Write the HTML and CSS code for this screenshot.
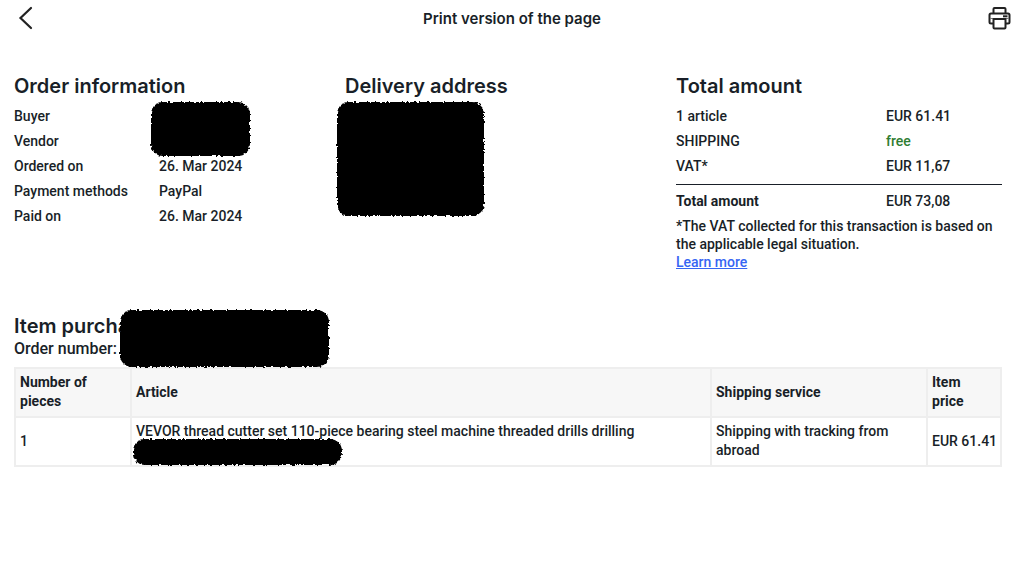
FILE: index.html
```html
<!DOCTYPE html>
<html lang="en">

<head>
  <meta charset="UTF-8" />
  <meta name="viewport" content="width=device-width, initial-scale=1.0" />
  <title>Print version of the page</title>
  <link rel="stylesheet" href="styles.css">
</head>

<body>
  <!-- rough marker edge for the blacked out areas -->
  <svg class="defs" width="0" height="0" aria-hidden="true">
    <filter id="rough" x="-5%" y="-10%" width="110%" height="120%">
      <feTurbulence type="fractalNoise" baseFrequency="0.4" numOctaves="2" seed="4" />
      <feDisplacementMap in="SourceGraphic" scale="4" xChannelSelector="R" yChannelSelector="G" />
    </filter>
  </svg>

  <header class="topbar">
    <button class="icon-btn" type="button" aria-label="Back">
      <svg width="24" height="24" viewBox="0 0 24 24" fill="none" stroke="#222" stroke-width="2.200" stroke-linecap="round">
        <path d="M19 2 8.500 12 19 22" />
      </svg>
    </button>
    <h1>Print version of the page</h1>
    <button class="icon-btn" type="button" aria-label="Print">
      <svg width="24" height="24" viewBox="0 0 24 24" fill="none" stroke="#222" stroke-width="2" stroke-linejoin="round">
        <path d="M5.500 7V3q0-1 1-1h10q1 0 1 1v4" />
        <path d="M5.500 17.500H3q-1.500 0-1.500-1.500V9Q1.500 7.500 3 7.500h17q1.500 0 1.500 1.500v7q0 1.500-1.500 1.500h-2.500" />
        <path d="M2 12.500h19" stroke-width="1" stroke="#777" />
        <path d="M5.500 13h12v8.500q0 1-1 1h-10q-1 0-1-1z" fill="#fff" />
        <path d="M15 10.300h4.500" />
      </svg>
    </button>
  </header>

  <main class="page">
    <section class="summary">
      <div class="block">
        <h2>Order information</h2>
        <dl class="info">
          <dt>Buyer</dt>
          <dd></dd>
          <dt>Vendor</dt>
          <dd></dd>
          <dt>Ordered on</dt>
          <dd>26. Mar 2024</dd>
          <dt>Payment methods</dt>
          <dd>PayPal</dd>
          <dt>Paid on</dt>
          <dd>26. Mar 2024</dd>
        </dl>
        <span class="redacted redacted-buyer"></span>
      </div>

      <div class="block">
        <h2>Delivery address</h2>
        <span class="redacted redacted-address"></span>
      </div>

      <div class="block">
        <h2>Total amount</h2>
        <dl class="info amounts">
          <dt>1 article</dt>
          <dd>EUR 61.41</dd>
          <dt>SHIPPING</dt>
          <dd class="free">free</dd>
          <dt>VAT*</dt>
          <dd>EUR 11,67</dd>
        </dl>
        <dl class="info amounts total">
          <dt>Total amount</dt>
          <dd>EUR 73,08</dd>
        </dl>
        <p class="note">*The VAT collected for this transaction is based on the applicable legal situation.<br><a href="#">Learn more</a></p>
      </div>
    </section>

    <section class="block">
      <h2>Item purcha</h2>
      <p class="order-number">Order number:</p>
      <span class="redacted redacted-order"></span>
      <table class="items">
        <thead>
          <tr>
            <th class="col-count">Number of pieces</th>
            <th>Article</th>
            <th class="col-shipping">Shipping service</th>
            <th class="col-price">Item<br>price</th>
          </tr>
        </thead>
        <tbody>
          <tr>
            <td>1</td>
            <td class="article">VEVOR thread cutter set 110-piece bearing steel machine threaded drills drilling
              <span class="redacted redacted-article"></span>
            </td>
            <td>Shipping with tracking from abroad</td>
            <td class="price">EUR 61.41</td>
          </tr>
        </tbody>
      </table>
    </section>
  </main>
</body>

</html>
```

FILE: styles.css
```css
* {
  box-sizing: border-box;
}

body {
  margin: 0;
  background: #fff;
  color: #191f28;
  font-family: Roboto, "Liberation Sans", sans-serif;
  font-size: 14px;
  font-weight: 500;
  line-height: 19px;
}

h1,
h2,
p,
dl,
dd {
  margin: 0;
}

.defs {
  position: absolute;
}

.topbar {
  display: flex;
  align-items: center;
  justify-content: space-between;
  height: 36px;
  padding: 0 12px;
}

.topbar h1 {
  font-family: Inter, "Liberation Sans", sans-serif;
  font-size: 15px;
  font-weight: 600;
}

.icon-btn {
  display: flex;
  padding: 0;
  border: none;
  background: none;
  cursor: pointer;
}

.page {
  padding: 37px 22px 0 14px;
}

.summary {
  display: grid;
  grid-template-columns: repeat(3, 1fr);
  gap: 5px;
  margin-bottom: 42px;
}

.block {
  position: relative;
}

h2 {
  font-family: Inter, "Liberation Sans", sans-serif;
  font-size: 20px;
  font-weight: 600;
  line-height: 26px;
}

.info {
  display: grid;
  grid-template-columns: 145px 1fr;
  row-gap: 6px;
  padding-top: 8px;
}

.amounts {
  grid-template-columns: 210px 1fr;
}

.free {
  color: #2f7d32;
}

.total {
  margin-top: 8px;
  padding-top: 7px;
  border-top: 1px solid #191f28;
}

.total dt {
  font-weight: 700;
}

.note {
  padding-top: 6px;
  line-height: 18px;
}

.note a {
  color: #3665f3;
}

.order-number {
  font-size: 16px;
  padding-bottom: 9px;
}

.items {
  width: 100%;
  border-collapse: collapse;
  table-layout: fixed;
}

.items th,
.items td {
  padding: 4px 4px 5px;
  border: 2px solid #eee;
  text-align: left;
}

.items th {
  background: #f7f7f7;
  font-weight: 700;
}

.items .col-count {
  width: 116px;
}

.items .col-shipping {
  width: 216px;
}

.items .col-price {
  width: 74px;
}

.items .price {
  white-space: nowrap;
}

.items .article {
  position: relative;
  vertical-align: top;
}

/* black marker areas over private data */
.redacted {
  position: absolute;
  border-radius: 12px;
  background: #000;
  filter: url(#rough);
}

.redacted-buyer {
  top: 29px;
  left: 137px;
  width: 99px;
  height: 54px;
}

.redacted-address {
  top: 29px;
  left: -8px;
  width: 147px;
  height: 114px;
}

.redacted-order {
  top: -3px;
  left: 106px;
  width: 209px;
  height: 57px;
}

.redacted-article {
  top: 21px;
  left: 1px;
  width: 209px;
  height: 26px;
}
```
